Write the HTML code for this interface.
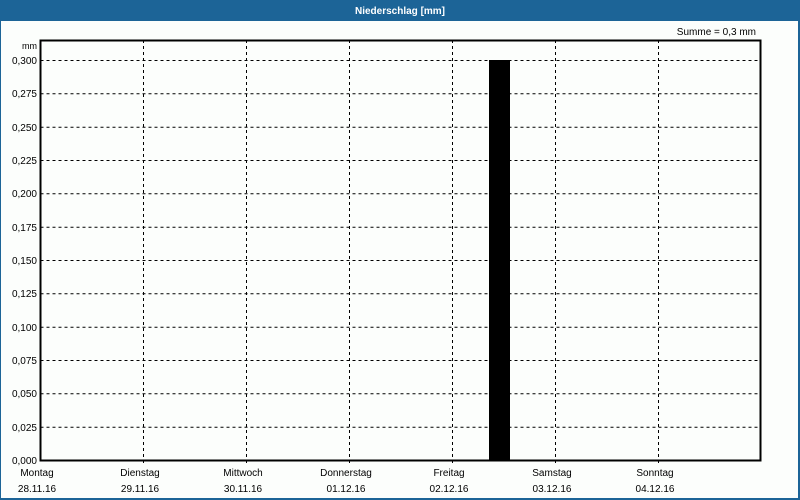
<!DOCTYPE html>
<html><head><meta charset="utf-8"><style>
html,body{margin:0;padding:0;width:800px;height:500px;overflow:hidden;background:#fcfefc}
svg{display:block}
text{font-family:"Liberation Sans","DejaVu Sans",sans-serif;font-size:10px;fill:#000}
</style></head><body>
<svg width="800" height="500" xmlns="http://www.w3.org/2000/svg">
<rect x="0" y="0" width="800" height="500" fill="#fcfefc"/>
<rect x="0" y="0" width="800" height="21" fill="#1c6497"/>
<rect x="0" y="0" width="1" height="500" fill="#1c6497"/>
<rect x="798" y="0" width="2" height="500" fill="#1c6497"/>
<rect x="0" y="498" width="800" height="2" fill="#1c6497"/>
<text x="400" y="14" text-anchor="middle" style="font-weight:bold;fill:#fff;font-size:10px">Niederschlag [mm]</text>
<text x="756" y="35" text-anchor="end">Summe = 0,3 mm</text>
<text x="37" y="49" text-anchor="end" style="font-size:9px">mm</text>
<g stroke="#000" stroke-width="1" stroke-dasharray="3,3" fill="none">
<path d="M40.5 60.5H760 M40.5 93.8H760 M40.5 127.2H760 M40.5 160.5H760 M40.5 193.8H760 M40.5 227.2H760 M40.5 260.5H760 M40.5 293.8H760 M40.5 327.2H760 M40.5 360.5H760 M40.5 393.8H760 M40.5 427.2H760"/>
<path d="M143.5 40V464 M246.5 40V464 M349.5 40V464 M452.5 40V464 M555.5 40V464 M658.5 40V464"/>
</g>
<rect x="489" y="60" width="21" height="400" fill="#000"/>
<rect x="40.5" y="40.5" width="720" height="420" fill="none" stroke="#000" stroke-width="2"/>
<g text-anchor="end">
<text x="37" y="64">0,300</text><text x="37" y="97">0,275</text><text x="37" y="131">0,250</text>
<text x="37" y="164">0,225</text><text x="37" y="197">0,200</text><text x="37" y="231">0,175</text>
<text x="37" y="264">0,150</text><text x="37" y="297">0,125</text><text x="37" y="331">0,100</text>
<text x="37" y="364">0,075</text><text x="37" y="397">0,050</text><text x="37" y="431">0,025</text>
<text x="37" y="464">0,000</text>
</g>
<g text-anchor="middle">
<text x="37" y="476">Montag</text><text x="37" y="492">28.11.16</text>
<text x="140" y="476">Dienstag</text><text x="140" y="492">29.11.16</text>
<text x="243" y="476">Mittwoch</text><text x="243" y="492">30.11.16</text>
<text x="346" y="476">Donnerstag</text><text x="346" y="492">01.12.16</text>
<text x="449" y="476">Freitag</text><text x="449" y="492">02.12.16</text>
<text x="552" y="476">Samstag</text><text x="552" y="492">03.12.16</text>
<text x="655" y="476">Sonntag</text><text x="655" y="492">04.12.16</text>
</g>
</svg>
</body></html>
